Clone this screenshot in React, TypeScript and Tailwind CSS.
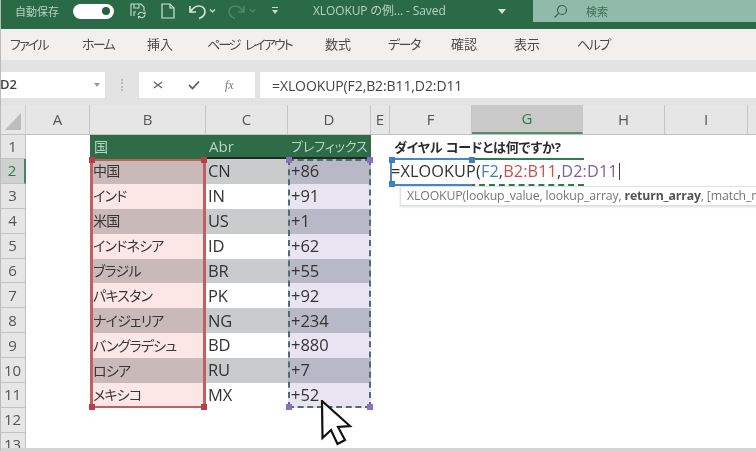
import React from "react";

const FONT = "[font-family:'Open_Sans','Noto_Sans_CJK_JP',sans-serif]";

const rows = [
  ["中国", "CN", "+86"],
  ["インド", "IN", "+91"],
  ["米国", "US", "+1"],
  ["インドネシア", "ID", "+62"],
  ["ブラジル", "BR", "+55"],
  ["パキスタン", "PK", "+92"],
  ["ナイジェリア", "NG", "+234"],
  ["バングラデシュ", "BD", "+880"],
  ["ロシア", "RU", "+7"],
  ["メキシコ", "MX", "+52"],
];

const tabs = [
  ["ファイル", "w-[82px] pl-[10px] tracking-[-1.8px]"],
  ["ホーム", "w-[65px] tracking-[-1.8px]"],
  ["挿入", "w-[60px]"],
  ["ページ レイアウト", "w-[118px] tracking-[-2px] [word-spacing:4px]"],
  ["数式", "w-[63px]"],
  ["データ", "w-[63px] tracking-[-1.5px]"],
  ["確認", "w-[63px]"],
  ["表示", "w-[63px]"],
  ["ヘルプ", "w-[60px] tracking-[-1.5px]"],
];

const cols = [
  ["A", "w-[64px]"],
  ["B", "w-[116px]"],
  ["C", "w-[82px]"],
  ["D", "w-[83px]"],
  ["E", "w-[19px]"],
  ["F", "w-[82px]"],
  ["G", "w-[111px]"],
  ["H", "w-[82px]"],
  ["I", "w-[83px]"],
];

function Handle({ className }: { className: string }) {
  return <div className={`absolute h-[6px] w-[6px] ${className}`} />;
}

export default function App() {
  return (
    <div className={`relative h-[451px] w-[756px] overflow-hidden bg-white blur-[0.45px] ${FONT} [font-feature-settings:'palt']`}>
      {/* title bar */}
      <div className="relative flex h-[29px] items-start bg-[#2a6a47] text-[#b7d2c3]">
        <div className="flex h-[22px] w-[533px] items-center">
          <span className="ml-[15px] w-[58px] text-[11px] leading-none">自動保存</span>
          <div className="flex h-[15px] w-[41px] items-center justify-end rounded-full bg-white pr-[4px]">
            <div className="h-[8px] w-[8px] rounded-full bg-[#26603f]" />
          </div>
          <svg className="ml-[14px] h-[20px] w-[20px]" viewBox="0 0 20 20" fill="none" stroke="#c6dccf" strokeWidth="1.1">
            <path d="M3 15V3h10l3 3v4" />
            <path d="M6 3v4h5V3M6 15v-4h2" />
            <path d="M10 14a3.4 3.4 0 0 1 6-1.5M17 13.5a3.4 3.4 0 0 1-6 2M15 12.5h2v-2M12.5 15.500h-2v2" />
          </svg>
          <svg className="ml-[12px] h-[18px] w-[16px]" viewBox="0 0 16 18" fill="none" stroke="#d3e3da" strokeWidth="1.2">
            <path d="M2 2h8l4 4v10H2z" />
            <path d="M10 2v4h4" />
          </svg>
          <svg className="ml-[12px] h-[18px] w-[20px]" viewBox="0 0 20 18" fill="none" stroke="#d3e3da" strokeWidth="1.7">
            <path d="M2 4v6h6M2.500 9.500C5 6 8 4 11 4c3.500 0 6 2.500 6 5.500 0 3-2 5.500-6 7" />
          </svg>
          <svg className="ml-[1px] h-[6px] w-[7px]" viewBox="0 0 7 6" fill="none" stroke="#d3e3da" strokeWidth="1.2">
            <path d="M1 1.500l2.500 2.500L6 1.500" />
          </svg>
          <svg className="ml-[11px] h-[18px] w-[19px]" viewBox="0 0 19 18" fill="none" stroke="#4f8a69" strokeWidth="1.5">
            <path d="M17 4v6h-6M16.500 9.500C14 6 11 4 8 4 4.500 4 2 6.500 2 9.500c0 3 2 5.500 6 7" />
          </svg>
          <svg className="ml-[3px] h-[6px] w-[7px]" viewBox="0 0 7 6" fill="none" stroke="#4f8a69" strokeWidth="1.2">
            <path d="M1 1.500l2.500 2.500L6 1.500" />
          </svg>
          <svg className="ml-[15px] h-[8px] w-[8px]" viewBox="0 0 8 8" fill="#c6dccf">
            <path d="M1 0h6v1H1zM1 3h6L4 7z" />
          </svg>
          <span className="ml-[34px] w-[136px] whitespace-nowrap text-[12px] leading-none tracking-[-0.1px]">XLOOKUP の例... - Saved</span>
          <svg className="ml-[49px] h-[5px] w-[8px]" viewBox="0 0 8 5" fill="#d3e3da">
            <path d="M0 0h8L4 5z" />
          </svg>
        </div>
        <div className="flex h-[22px] flex-1 items-center bg-[#8fbba8] pl-[20px] text-[#3f6f58]">
          <svg className="h-[15px] w-[15px]" viewBox="0 0 15 15" fill="none" stroke="#2f6149" strokeWidth="1.1">
            <circle cx="9" cy="6" r="4.500" />
            <path d="M5.700 9.300L1.500 13.500" />
          </svg>
          <span className="ml-[18px] text-[11px] leading-none">検索</span>
        </div>
      </div>

      {/* ribbon tabs */}
      <div className="flex h-[31px] items-center bg-[#f3efec] text-[13px] leading-none text-[#4a4a4a]">
        {tabs.map(([t, w]) => (
          <span key={t} className={`shrink-0 whitespace-nowrap ${w}`}>{t}</span>
        ))}
      </div>

      {/* formula bar */}
      <div className="h-[45px] bg-[#e3e3e3] pt-[12px]">
        <div className="flex h-[26px] items-stretch">
          <div className="flex w-[105px] items-center justify-between bg-white pr-[5px] text-[13px] font-semibold text-[#444]">
            <span>D2</span>
            <svg className="h-[4px] w-[6px]" viewBox="0 0 6 4" fill="#999"><path d="M0 0h6L3 4z" /></svg>
          </div>
          <div className="flex w-[34px] items-center justify-center">
            <div className="h-[12px] border-l-2 border-dotted border-[#bdbdbd]" />
          </div>
          <div className="flex w-[116px] items-center bg-white text-[#555]">
            <svg className="ml-[14px] h-[10px] w-[10px]" viewBox="0 0 10 10" fill="none" stroke="#666" strokeWidth="1.3">
              <path d="M1 2l8 6M9 2L1 8" />
            </svg>
            <svg className="ml-[25px] h-[10px] w-[12px]" viewBox="0 0 12 10" fill="none" stroke="#555" strokeWidth="1.7">
              <path d="M1 5l3.500 3.500L11 1.500" />
            </svg>
            <span className="ml-[25px] [font-family:'Liberation_Serif',serif] text-[12px] italic text-[#777]">fx</span>
          </div>
          <div className="ml-[5px] flex flex-1 items-center bg-white pl-[12px] text-[14px] font-medium tracking-[-0.1px] text-[#444]">
            =XLOOKUP(F2,B2:B11,D2:D11
          </div>
        </div>
      </div>

      {/* sheet */}
      <div className="relative">
        <div className="flex h-[30px] border-b border-[#c2c2c2] bg-[#e6e6e6] text-[15px] text-[#555]">
          <div className="flex w-[26px] items-end justify-center border-r border-[#cfcfcf] pb-[4px]">
            <svg className="h-[17px] w-[16px]" viewBox="0 0 16 17" fill="#bcbcbc"><path d="M16 0v17H0z" /></svg>
          </div>
          {cols.map(([c, w]) => (
            <div
              key={c}
              className={`flex shrink-0 items-center justify-center border-r border-[#c6c6c6] ${w} ${c === "G" ? "border-b-2 border-b-[#4f8f6d] bg-[#c9c9c9] text-[#2f7a52]" : ""}`}
            >
              {c}
            </div>
          ))}
          <div className="flex-1" />
        </div>

        <div className="grid grid-cols-[26px_64px_116px_82px_83px_19px_82px_111px_82px_83px_1fr] grid-rows-[24px_repeat(12,24.900px)] text-[16.500px] leading-none text-[#333]">
          <Header n="1" />
          <div />
          <div className="flex items-center bg-[#2e6b47] pl-[4px] text-[14px] text-[#b5d6c3]">国</div>
          <div className="flex items-center border-b-2 border-b-[#1d2b22] bg-[#2e6b47] pl-[3px] text-[15px] text-[#b5d6c3]">Abr</div>
          <div className="flex items-center whitespace-nowrap border-b-2 border-b-[#1d2b22] bg-[#2e6b47] pl-[3px] text-[13px] tracking-[-0.1px] text-[#b5d6c3]">プレフィックス</div>
          <div />
          <div className="col-span-5 flex items-center pl-[4px] text-[13px] font-bold tracking-[-0.1px] text-[#2b2b2b]">ダイヤル コードとは何ですか?</div>

          {rows.map((r, i) => {
            const odd = i % 2 === 0;
            return (
              <React.Fragment key={r[1]}>
                <Header n={String(i + 2)} active={i === 0} />
                <div />
                <div className={`flex items-center whitespace-nowrap pl-[3px] text-[14px] tracking-[-0.8px] text-[#3a3535] ${odd ? "bg-[#c9b9b9]" : "bg-[#fde6e6]"}`}>{r[0]}</div>
                <div className={`flex items-center pl-[2px] tracking-[-0.2px] ${odd ? "bg-[#c9cbcd]" : "bg-white"}`}>{r[1]}</div>
                <div className={`flex items-center pl-[3px] ${odd ? "bg-[#b9b8c6]" : "bg-[#e8e4f2]"}`}>{r[2]}</div>
                <div />
                {i === 0 ? (
                  <div className="col-span-5 flex items-center whitespace-nowrap pl-[1px] text-[16.300px] tracking-[0.1px] text-[#333]">
                    <span>=XLOOKUP(</span>
                    <span className="text-[#3f7fc0]">F2</span>
                    <span>,</span>
                    <span className="text-[#c9504f]">B2:B11</span>
                    <span>,</span>
                    <span className="text-[#7a5fb0]">D2:D11</span>
                    <span className="ml-[1px] h-[17px] border-l border-[#444]" />
                  </div>
                ) : (
                  <div className="col-span-5" />
                )}
              </React.Fragment>
            );
          })}
          <Header n="12" />
          <div className="col-span-10" />
          <Header n="13" />
          <div className="col-span-10" />
        </div>

        {/* B range */}
        <div className="absolute left-[90px] top-[54px] h-[249px] w-[116px] border-x-[3px] border-y-2 border-[#c0605f]">
          <Handle className="-left-[4px] -top-[4px] bg-[#b93f46]" />
          <Handle className="-right-[4px] -top-[4px] bg-[#b93f46]" />
          <Handle className="-bottom-[4px] -left-[4px] bg-[#b93f46]" />
          <Handle className="-bottom-[4px] -right-[4px] bg-[#b93f46]" />
        </div>
        {/* D range */}
        <div className="absolute left-[288px] top-[54px] h-[249px] w-[83px] border-2 border-dashed border-[#4a6f6d]">
          <Handle className="-left-[4px] -top-[4px] bg-[#8a70c0]" />
          <Handle className="-right-[4px] -top-[4px] bg-[#8a70c0]" />
          <Handle className="-bottom-[4px] -left-[4px] bg-[#8a70c0]" />
          <Handle className="-bottom-[4px] -right-[4px] bg-[#8a70c0]" />
        </div>
        {/* active cell edges */}
        <div className="absolute left-[390px] top-[53px] h-[2px] w-[194px] bg-[#2f7a52]" />
        <div className="absolute left-[390px] top-[79px] h-[2px] w-[194px] border-b-2 border-dashed border-[#2f7a52]" />
        <div className="absolute left-[390px] top-[53px] h-[28px] w-[82px] border-2 border-r-0 border-[#4a86c5]">
          <Handle className="-left-[3px] -top-[3px] bg-[#3f7fc0]" />
          <Handle className="-right-[3px] -top-[3px] bg-[#3f7fc0]" />
          <Handle className="-bottom-[3px] -left-[3px] bg-[#3f7fc0]" />
        </div>
        {/* tooltip */}
        <div className="absolute left-[400px] top-[81px] flex h-[20px] w-[370px] items-center overflow-hidden whitespace-nowrap border border-[#e0e0e0] bg-white pl-[6px] text-[12.300px] tracking-[-0.15px] text-[#777] shadow-[0_1px_2px_rgba(0,0,0,0.15)]">
          XLOOKUP(lookup_value, lookup_array,&nbsp;<b className="font-bold text-[#555]">return_array</b>, [match_mode]
        </div>
        {/* mouse pointer */}
        <svg className="absolute left-[318px] top-[295px] h-[50px] w-[36px]" viewBox="0 0 36 50" fill="white" stroke="#111" strokeWidth="2.200" strokeLinejoin="miter">
          <path d="M4 1L4.500 38L13 30L19.500 44L27 40L20 27L32 26Z" />
        </svg>
      </div>

      <div className="absolute bottom-0 left-0 h-[3px] w-full bg-[#d4d4d4]" />
      <div className="absolute left-0 top-0 h-full w-[1px] bg-[#bbbbbb]" />
    </div>
  );
}

function Header({ n, active }: { n: string; active?: boolean }) {
  return (
    <div
      className={`flex items-center justify-center border-b border-r border-[#c2c2c2] text-[15px] ${active ? "border-r-2 border-r-[#3f8a62] bg-[#cfd1d1] text-[#2f7a52]" : "bg-[#e6e6e6] text-[#555]"}`}
    >
      {n}
    </div>
  );
}
